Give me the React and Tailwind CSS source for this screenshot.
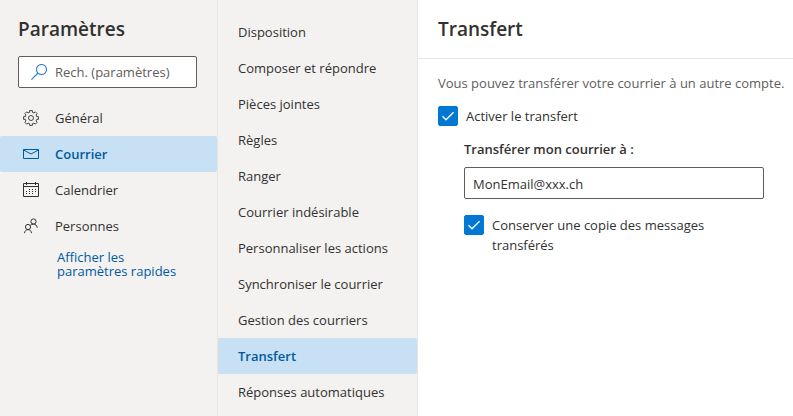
import React, { useState } from 'react';

const SearchIcon = () => (
  <svg className="h-4 w-4 shrink-0" viewBox="0 0 16 16" fill="none" stroke="#2b7cd3" strokeWidth="1.1">
    <circle cx="10.5" cy="5.5" r="5" />
    <path d="M7 9L.4 15.6" />
  </svg>
);

const GearIcon = () => (
  <svg className="h-4 w-4 shrink-0" viewBox="0 0 16 16" fill="none" stroke="currentColor" strokeWidth="0.9" strokeLinejoin="round">
    <path d="M6.6 2.3V.6h2.8v1.7l1.64.68 1.2-1.2 1.98 1.98-1.2 1.2.68 1.64h1.7v2.8h-1.7l-.68 1.64 1.2 1.2-1.98 1.98-1.2-1.2-1.64.68v1.7H6.6v-1.7l-1.64-.68-1.2 1.2-1.98-1.98 1.2-1.2-.68-1.64H.6V6.6h1.7l.68-1.64-1.2-1.2 1.98-1.98 1.2 1.2z" />
    <circle cx="8" cy="8" r="2.5" />
  </svg>
);

const MailIcon = () => (
  <svg className="h-4 w-4 shrink-0" viewBox="0 0 16 16" fill="none" stroke="currentColor">
    <path d="M.5 3.5h15v9H.5z" />
    <path d="M.5 4l7.5 4 7.5-4" />
  </svg>
);

const CalendarIcon = () => (
  <svg className="h-4 w-4 shrink-0" viewBox="0 0 16 16" fill="none" stroke="currentColor">
    <path d="M.5 1.5h15v13H.5zM.5 4.500h15M3.500 0v3M12.500 0v3" />
    <path d="M6 7.500h8M3 9.500h11M3 11.500h8" strokeDasharray="1 2" />
  </svg>
);

const PeopleIcon = () => (
  <svg className="h-4 w-4 shrink-0" viewBox="0 0 16 16" fill="none" stroke="currentColor">
    <circle cx="10.500" cy="3.500" r="2.600" />
    <circle cx="5" cy="9" r="2.600" />
    <path d="M1.500 15.200c.2-2.200 1.600-3.600 3.500-3.600s3.300 1.400 3.500 3.600" />
    <path d="M7.300 7.300C8.100 6.500 9.200 6.100 10.500 6.100c2 0 3.500 1.400 3.700 3.600" />
  </svg>
);

const categories = [
  { name: 'Général', Icon: GearIcon },
  { name: 'Courrier', Icon: MailIcon },
  { name: 'Calendrier', Icon: CalendarIcon },
  { name: 'Personnes', Icon: PeopleIcon }
];

const sections = [
  'Disposition',
  'Composer et répondre',
  'Pièces jointes',
  'Règles',
  'Ranger',
  'Courrier indésirable',
  'Personnaliser les actions',
  'Synchroniser le courrier',
  'Gestion des courriers',
  'Transfert',
  'Réponses automatiques'
];

const Checkbox = ({ id, checked, onChange, children }) => (
  <div className="flex items-start gap-2">
    <span className="grid h-5 w-5 shrink-0">
      <input
        id={id}
        type="checkbox"
        checked={checked}
        onChange={onChange}
        className="col-start-1 row-start-1 h-5 w-5 appearance-none rounded-xs border border-[#605e5c] bg-white checked:border-[#0078d4] checked:bg-[#0078d4]"
      />
      {checked && (
        <svg className="pointer-events-none col-start-1 row-start-1 h-5 w-5" viewBox="0 0 20 20" fill="none" stroke="white" strokeWidth="1.3">
          <path d="M4.500 10.300l3.500 3.500L15.600 6.200" />
        </svg>
      )}
    </span>
    <label htmlFor={id} className="leading-5">{children}</label>
  </div>
);

const App = () => {
  const [category, setCategory] = useState('Courrier');
  const [section, setSection] = useState('Transfert');
  const [search, setSearch] = useState('');
  const [forward, setForward] = useState(true);
  const [keepCopy, setKeepCopy] = useState(true);
  const [email, setEmail] = useState('MonEmail@xxx.ch');

  return (
    <div className="flex min-h-screen bg-white font-['Open_Sans',sans-serif] text-[13px] text-[#323130]">
      <aside className="w-[218px] shrink-0 border-r border-[#e8e6e4] bg-[#f3f2f1]">
        <h1 className="px-[18px] pt-[17px] text-[19px] leading-6 font-semibold">Paramètres</h1>
        <div className="mt-[15px] mr-5 ml-[18px] flex h-8 items-center gap-2 rounded-xs border border-[#605e5c] bg-white px-3">
          <SearchIcon />
          <input
            type="text"
            aria-label="Rech. (paramètres)"
            placeholder="Rech. (paramètres)"
            value={search}
            onChange={(e) => setSearch(e.target.value)}
            className="w-full min-w-0 pt-0.5 outline-none placeholder:text-[#605e5c]"
          />
        </div>
        <nav className="mt-3">
          {categories.map(({ name, Icon }) => (
            <button
              key={name}
              type="button"
              onClick={() => setCategory(name)}
              className={`flex h-9 w-full items-center gap-4 rounded-xs pl-[23px] text-left ${
                category === name ? 'bg-[#c7e0f4] font-semibold text-[#005a9e]' : ''
              }`}
            >
              <Icon />
              <span className="pt-0.5">{name}</span>
            </button>
          ))}
        </nav>
        <a href="#" className="mt-1.5 ml-[57px] block w-[130px] leading-[14px] text-[#005a9e]">
          Afficher les paramètres rapides
        </a>
      </aside>

      <nav className="w-[200px] shrink-0 border-r border-[#e8e6e4] bg-[#f3f2f1] pt-3.5">
        {sections.map((name) => (
          <button
            key={name}
            type="button"
            onClick={() => setSection(name)}
            className={`block h-9 w-full rounded-xs pt-0.5 pl-5 text-left ${
              section === name ? 'bg-[#c7e0f4] font-semibold text-[#005a9e]' : ''
            }`}
          >
            {name}
          </button>
        ))}
      </nav>

      <main className="min-w-0 flex-1">
        <h2 className="border-b border-[#e8e6e4] px-5 pt-[17px] pb-[17px] text-[19px] leading-6 font-semibold">Transfert</h2>
        <div className="pt-3.5 pl-5">
          <p className="leading-5 text-[#605e5c]">Vous pouvez transférer votre courrier à un autre compte.</p>
          <div className="mt-[13px]">
            <Checkbox id="forward" checked={forward} onChange={(e) => setForward(e.target.checked)}>
              Activer le transfert
            </Checkbox>
          </div>
          <div className="mt-[13px] mr-[29px] ml-[26px]">
            <label htmlFor="email" className="block leading-5 font-semibold">Transférer mon courrier à :</label>
            <input
              id="email"
              type="email"
              value={email}
              onChange={(e) => setEmail(e.target.value)}
              className="mt-2 mb-4 h-8 w-full rounded-xs border border-[#605e5c] px-2 pt-0.5 outline-none"
            />
            <Checkbox id="keepCopy" checked={keepCopy} onChange={(e) => setKeepCopy(e.target.checked)}>
              Conserver une copie des messages transférés
            </Checkbox>
          </div>
        </div>
      </main>
    </div>
  );
};

export default App;
